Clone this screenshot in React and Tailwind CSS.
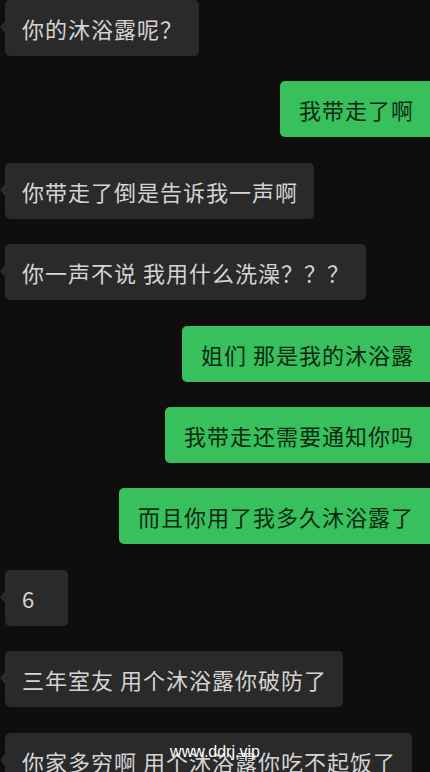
const messages = [
  { me: false, text: '你的沐浴露呢？' },
  { me: true, text: '我带走了啊' },
  { me: false, text: '你带走了倒是告诉我一声啊' },
  { me: false, text: '你一声不说 我用什么洗澡？？？' },
  { me: true, text: '姐们 那是我的沐浴露' },
  { me: true, text: '我带走还需要通知你吗' },
  { me: true, text: '而且你用了我多久沐浴露了' },
  { me: false, text: '6' },
  { me: false, text: '三年室友 用个沐浴露你破防了' },
  { me: false, text: '你家多穷啊 用个沐浴露你吃不起饭了' },
];

const Bubble = ({ me, text }) => {
  if (me) {
    return (
      <div className="flex justify-end">
        <div className="h-[56px] flex items-center pl-[19px] pr-[17px] -mr-[1px] bg-[#37c05c] rounded-l-[5px] text-[#0c2a13]">
          <span className="whitespace-pre">{text}</span>
        </div>
      </div>
    );
  }
  return (
    <div className="flex justify-start">
      <div className="relative ml-[5px] min-w-[63px] h-[56px] flex items-center pl-[17px] pr-[16px] bg-[#2a2a2a] rounded-[5px] text-[#d4d4d4]">
        <span className="absolute -left-[5px] top-[21px] w-0 h-0 border-y-[6px] border-y-transparent border-r-[5px] border-r-[#2a2a2a]" />
        <span className="whitespace-pre">{text}</span>
      </div>
    </div>
  );
};

export default function App() {
  return (
    <div
      className="relative w-full h-[772px] overflow-hidden bg-[#0e0e0e] text-[22px] tracking-[1px] leading-none"
      style={{ fontFamily: '"Noto Sans CJK SC", "Noto Sans", sans-serif' }}
    >
      <div className="flex flex-col gap-[25.4px]">
        {messages.map((m, i) => (
          <Bubble key={i} me={m.me} text={m.text} />
        ))}
      </div>
      <div
        className="absolute left-0 right-0 top-[744px] text-center text-white text-[16px] tracking-normal"
        style={{ fontFamily: '"Liberation Sans", Arial, sans-serif' }}
      >
        www.ddrj.vip
      </div>
    </div>
  );
}
